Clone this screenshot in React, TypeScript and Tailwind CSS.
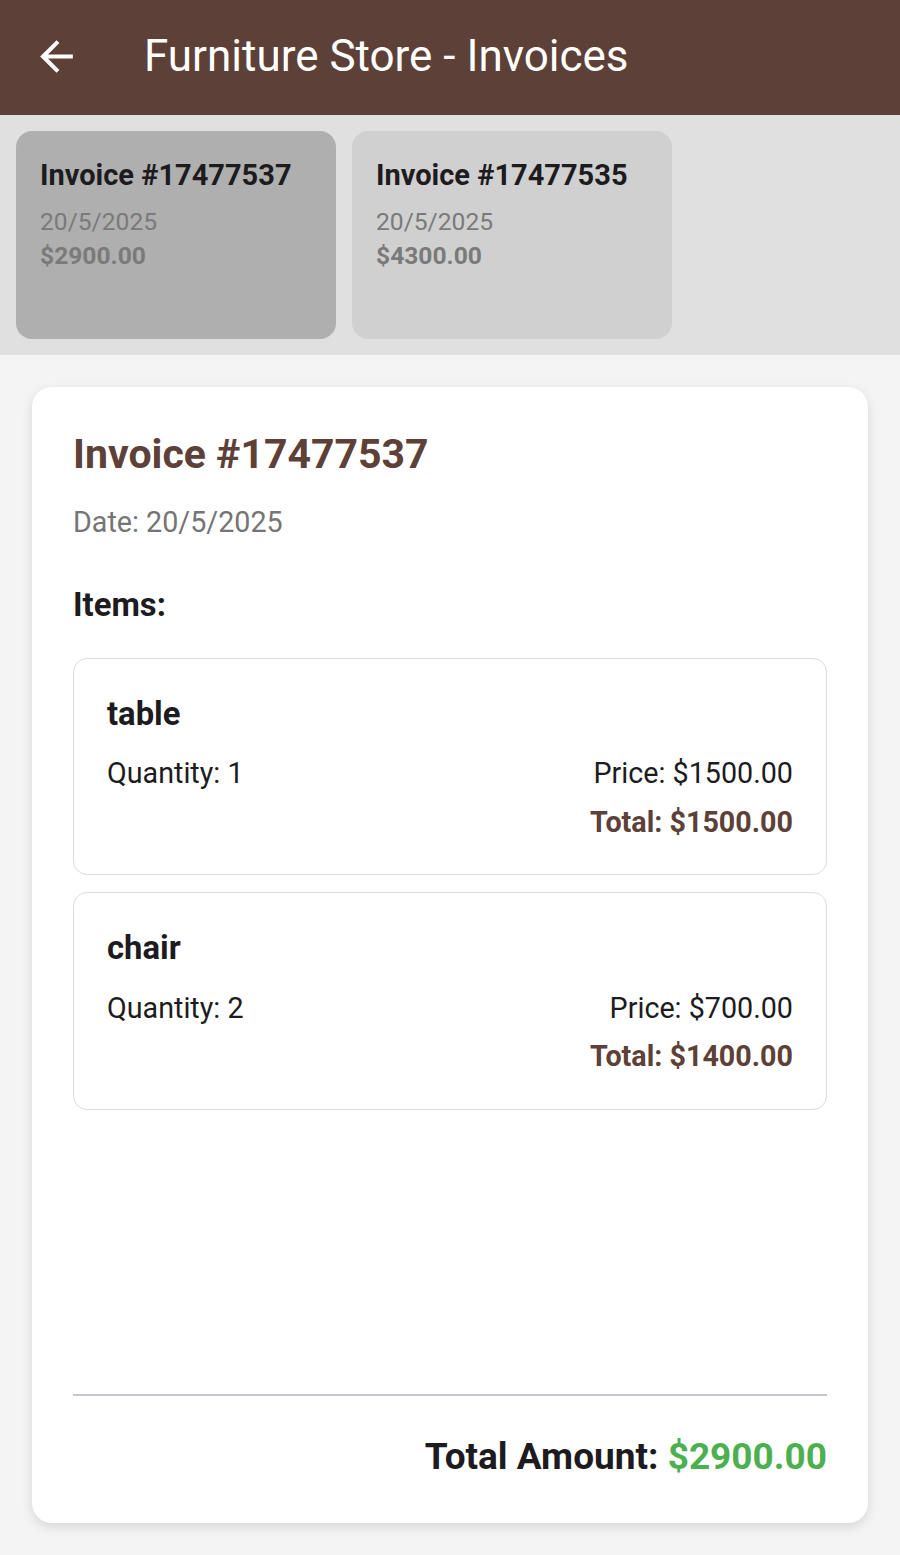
import { useState } from "react"

type Item = { name: string; qty: number; price: number }
type Invoice = { id: string; date: string; items: Item[] }

const invoices: Invoice[] = [
  {
    id: "17477537",
    date: "20/5/2025",
    items: [
      { name: "table", qty: 1, price: 1500 },
      { name: "chair", qty: 2, price: 700 },
    ],
  },
  {
    id: "17477535",
    date: "20/5/2025",
    items: [
      { name: "sofa", qty: 1, price: 3000 },
      { name: "lamp", qty: 2, price: 650 },
    ],
  },
]

const total = (inv: Invoice) =>
  inv.items.reduce((sum, it) => sum + it.qty * it.price, 0)

function BackArrow() {
  return (
    <svg viewBox="0 0 24 24" className="w-[49px] h-[49px]" fill="#ffffff">
      <path d="M20 11H7.83l5.59-5.59L12 4l-8 8 8 8 1.41-1.41L7.83 13H20v-2z" />
    </svg>
  )
}

export default function App() {
  const [selected, setSelected] = useState(0)
  const inv = invoices[selected]

  return (
    <div
      className="w-[900px] h-[1555px] flex flex-col bg-[#f4f4f4] leading-[1.17]"
      style={{ fontFamily: "Roboto, 'Noto Sans', sans-serif" }}
    >
      {/* App bar */}
      <header className="h-[115px] shrink-0 bg-[#5d4037] flex items-center">
        <button className="ml-[32px] -mt-[2px]" aria-label="Back">
          <BackArrow />
        </button>
        <h1 className="ml-[63px] -mt-[1px] text-white text-[44px]">
          Furniture Store - Invoices
        </h1>
      </header>

      {/* Invoice strip */}
      <div className="h-[240px] shrink-0 bg-[#e0e0e0] flex gap-[16px] p-[16px]">
        {invoices.map((item, i) => (
          <button
            key={item.id}
            onClick={() => setSelected(i)}
            className={`w-[320px] rounded-[16px] text-left pl-[24px] pt-[28px] flex flex-col ${
              i === selected ? "bg-[#afafaf]" : "bg-[#d0d0d0]"
            }`}
          >
            <span className="text-[29px] font-bold text-[#1d1b20]">
              Invoice #{item.id}
            </span>
            <span className="mt-[15px] text-[24.6px] text-[#7a7a7a]">
              {item.date}
            </span>
            <span className="mt-[5px] text-[24.6px] font-bold text-[#7a7a7a]">
              ${total(item).toFixed(2)}
            </span>
          </button>
        ))}
      </div>

      {/* Detail */}
      <div className="flex-1 flex p-[32px]">
        <div className="flex-1 bg-white rounded-[20px] shadow-[0_4px_12px_rgba(0,0,0,0.12)] p-[41px] pb-[45px] flex flex-col">
          <h2 className="mt-[3px] text-[41px] font-bold text-[#5d4037]">
            Invoice #{inv.id}
          </h2>
          <p className="mt-[27px] text-[28.7px] text-[#757575]">
            Date: {inv.date}
          </p>
          <p className="mt-[46px] text-[32.8px] font-bold text-[#1d1b20]">
            Items:
          </p>

          <div className="flex-1 mt-[34px] flex flex-col gap-[17px]">
            {inv.items.map((it) => (
              <div
                key={it.name}
                className="border-[1.5px] border-[#dcdcdc] rounded-[14px] px-[33px] pt-[36px] pb-[35px]"
              >
                <p className="text-[32.8px] font-bold text-[#1d1b20]">
                  {it.name}
                </p>
                <div className="mt-[24px] flex justify-between text-[28.7px] text-[#1d1b20]">
                  <span>Quantity: {it.qty}</span>
                  <div className="flex flex-col items-end">
                    <span>Price: ${it.price.toFixed(2)}</span>
                    <span className="mt-[15px] font-bold text-[#5d4037]">
                      Total: ${(it.qty * it.price).toFixed(2)}
                    </span>
                  </div>
                </div>
              </div>
            ))}
          </div>

          <div className="h-[2px] bg-[#cac4d0]" />
          <p className="mt-[39px] text-right text-[37px] font-bold text-[#1d1b20]">
            Total Amount:{" "}
            <span className="text-[#4caf50]">${total(inv).toFixed(2)}</span>
          </p>
        </div>
      </div>
    </div>
  )
}
